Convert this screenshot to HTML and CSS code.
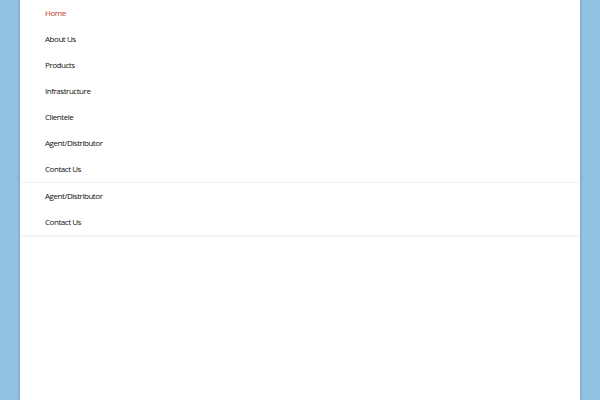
FILE: index.html
```html
<!DOCTYPE html>
<html lang="en">
<head>
    <meta charset="UTF-8">
    <meta name="viewport" content="width=device-width, initial-scale=1.0">
    <title>Menu</title>
    <link rel="stylesheet" href="styles.css">
</head>
<body>
    <div class="page">
        <ul class="menu">
            <li class="active"><a href="#">Home</a></li>
            <li><a href="#">About Us</a></li>
            <li><a href="#">Products</a></li>
            <li><a href="#">Infrastructure</a></li>
            <li><a href="#">Clientele</a></li>
            <li><a href="#">Agent/Distributor</a></li>
            <li><a href="#">Contact Us</a></li>
        </ul>
        <ul class="menu menu-extra">
            <li><a href="#">Agent/Distributor</a></li>
            <li><a href="#">Contact Us</a></li>
        </ul>
    </div>
</body>
</html>
```

FILE: styles.css
```css
html, body { margin: 0; padding: 0; height: 100%; }
body { background: #93c2e4; font-family: "Open Sans", Arial, sans-serif; }
.page { background: #fff; margin: 0 20px; min-height: 100%; box-shadow: 0 0 3px rgba(0, 0, 0, 0.25); }
.menu { position: relative; list-style: none; margin: 0; padding: 0 0 0 25px; background: #fff; box-shadow: 0 1px 4px rgba(0, 0, 0, 0.07); }
.menu-extra { margin-top: 1px; }
.menu li a { display: block; height: 26px; line-height: 26px; font-size: 8px; letter-spacing: -0.45px; color: #111; text-decoration: none; }
.menu li.active a { color: #c0392b; }
```
